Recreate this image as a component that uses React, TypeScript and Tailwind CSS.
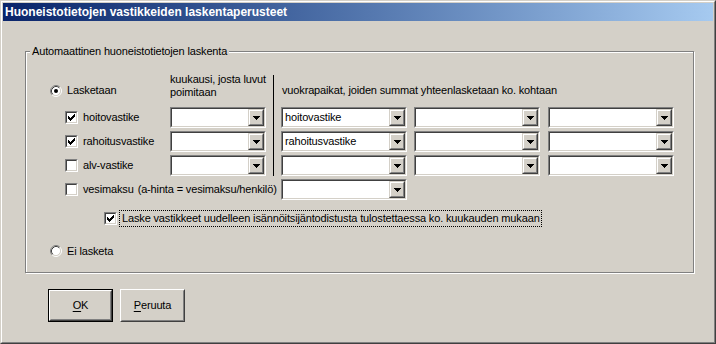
import React from 'react';

// classic win2k 3d frames
const Sunken: React.FC<{ className?: string; children?: React.ReactNode }> = ({ className = '', children }) => (
  <div className={`border border-t-[#808080] border-l-[#808080] border-b-white border-r-white ${className}`}>
    <div className="flex h-full w-full border border-t-[#404040] border-l-[#404040] border-b-[#d4d0c8] border-r-[#d4d0c8] bg-white">
      {children}
    </div>
  </div>
);

const Arrow = () => (
  <svg width="7" height="4" viewBox="0 0 7 4" shapeRendering="crispEdges">
    <rect x="0" y="0" width="7" height="1" fill="#000" />
    <rect x="1" y="1" width="5" height="1" fill="#000" />
    <rect x="2" y="2" width="3" height="1" fill="#000" />
    <rect x="3" y="3" width="1" height="1" fill="#000" />
  </svg>
);

const Combo: React.FC<{ value?: string; className?: string }> = ({ value = '', className = '' }) => (
  <Sunken className={`h-[21px] ${className}`}>
    <div className="flex-1 overflow-hidden whitespace-nowrap pl-[2px] text-[11px] leading-[17px]">{value}</div>
    <div className="h-full w-[16px] border border-t-[#d4d0c8] border-l-[#d4d0c8] border-b-[#404040] border-r-[#404040]">
      <div className="flex h-full w-full items-center justify-center border border-t-white border-l-white border-b-[#808080] border-r-[#808080] bg-[#d4d0c8]">
        <Arrow />
      </div>
    </div>
  </Sunken>
);

const Check: React.FC<{ checked?: boolean }> = ({ checked }) => (
  <Sunken className="h-[13px] w-[13px] shrink-0">
    {checked && (
      <svg width="7" height="7" viewBox="0 0 7 7" shapeRendering="crispEdges" className="ml-px mt-px">
        <rect x="0" y="2" width="1" height="3" fill="#000" />
        <rect x="1" y="3" width="1" height="3" fill="#000" />
        <rect x="2" y="4" width="1" height="3" fill="#000" />
        <rect x="3" y="3" width="1" height="3" fill="#000" />
        <rect x="4" y="2" width="1" height="3" fill="#000" />
        <rect x="5" y="1" width="1" height="3" fill="#000" />
        <rect x="6" y="0" width="1" height="3" fill="#000" />
      </svg>
    )}
  </Sunken>
);

const Radio: React.FC<{ checked?: boolean }> = ({ checked }) => (
  <svg width="12" height="12" viewBox="0 0 12 12" className="shrink-0">
    <circle cx="6" cy="6" r="4.5" fill="#fff" />
    <path d="M2.11 9.89 A5.5 5.5 0 0 1 9.89 2.11" fill="none" stroke="#808080" />
    <path d="M9.89 2.11 A5.5 5.5 0 0 1 2.11 9.89" fill="none" stroke="#fff" />
    <path d="M2.82 9.18 A4.5 4.5 0 0 1 9.18 2.82" fill="none" stroke="#404040" />
    <path d="M9.18 2.82 A4.5 4.5 0 0 1 2.82 9.18" fill="none" stroke="#d4d0c8" />
    {checked && <circle cx="6" cy="6" r="2" fill="#000" />}
  </svg>
);

const rows = [
  { label: 'hoitovastike', checked: true, value: 'hoitovastike' },
  { label: 'rahoitusvastike', checked: true, value: 'rahoitusvastike' },
  { label: 'alv-vastike', checked: false, value: '' },
];

const App: React.FC = () => {
  return (
    <div className="h-[344px] w-[716px] border border-t-[#d4d0c8] border-l-[#d4d0c8] border-b-[#404040] border-r-[#404040] bg-[#d4d0c8] font-['Liberation_Sans',Arial,sans-serif] text-[11px] tracking-[-0.15px] text-black">
      <div className="h-full w-full border border-t-white border-l-white border-b-[#808080] border-r-[#808080] p-px">
        {/* title bar */}
        <div className="h-[18px] bg-linear-to-r from-[#0a246a] to-[#a6caf0] pl-[2px] text-[12px] font-bold leading-[18px] tracking-normal text-white">
          Huoneistotietojen vastikkeiden laskentaperusteet
        </div>

        {/* group box */}
        <div className="relative ml-[22px] mt-[30px] h-[222px] w-[669px] border border-[#808080] shadow-[inset_1px_1px_0_#fff,1px_1px_0_#fff]">
          <div className="absolute left-[4px] top-[-7px] bg-[#d4d0c8] px-[2px] leading-[13px]">
            Automaattinen huoneistotietojen laskenta
          </div>

          <div className="pt-[21px]">
            <div className="grid grid-cols-[144px_96px_15px_126px_7px_126px_8px_126px] grid-rows-[31px_21px_21px_21px_21px] gap-y-[3px]">
              {/* header */}
              <div className="col-start-1 row-start-1 mt-[11px] flex h-[13px] items-center gap-[5px] pl-[24px]">
                <Radio checked />
                <span className="leading-[13px]">Lasketaan</span>
              </div>
              <div className="col-start-2 row-start-1 whitespace-nowrap leading-[13px]">
                kuukausi, josta luvut
                <br />
                poimitaan
              </div>
              <div className="col-start-3 row-span-4 row-start-1 mt-[2px] w-px justify-self-center bg-black" />
              <div className="col-span-5 col-start-4 row-start-1 mt-[11px] whitespace-nowrap pl-px leading-[13px]">
                vuokrapaikat, joiden summat yhteenlasketaan ko. kohtaan
              </div>

              {rows.map((r, i) => (
                <React.Fragment key={r.label}>
                  <div className="col-start-1 flex items-center gap-[5px] pl-[39px]" style={{ gridRowStart: i + 2 }}>
                    <Check checked={r.checked} />
                    <span className="leading-[13px]">{r.label}</span>
                  </div>
                  <Combo className="col-start-2" />
                  <Combo className="col-start-4" value={r.value} />
                  <Combo className="col-start-6" />
                  <Combo className="col-start-8" />
                </React.Fragment>
              ))}

              <div className="col-span-3 col-start-1 row-start-5 flex items-center pl-[39px]">
                <Check />
                <span className="ml-[5px] leading-[13px]">vesimaksu</span>
                <span className="ml-[4px] whitespace-nowrap leading-[13px]">(a-hinta = vesimaksu/henkilö)</span>
              </div>
              <Combo className="col-start-4 row-start-5" />
            </div>

            <div className="mt-[10px] flex h-[17px] items-center pl-[78px]">
              <Check checked />
              <div className="ml-[2px] h-[17px] w-[423px] overflow-hidden whitespace-nowrap border border-dotted border-black pl-[2px] leading-[15px]">
                Laske vastikkeet uudelleen isännöitsijäntodistusta tulostettaessa ko. kuukauden mukaan
              </div>
            </div>

            <div className="mt-[18px] flex h-[12px] items-center gap-[5px] pl-[24px]">
              <Radio />
              <span className="leading-[13px]">Ei lasketa</span>
            </div>
          </div>
        </div>

        {/* buttons */}
        <div className="ml-[45px] mt-[16px] flex gap-[7px]">
          <div className="h-[33px] w-[65px] border border-black">
            <div className="h-full w-full border border-t-white border-l-white border-b-[#404040] border-r-[#404040]">
              <div className="flex h-full w-full items-center justify-center border border-t-[#d4d0c8] border-l-[#d4d0c8] border-b-[#808080] border-r-[#808080]">
                <span><span className="underline underline-offset-[2px]">O</span>K</span>
              </div>
            </div>
          </div>
          <div className="h-[33px] w-[65px] border border-t-white border-l-white border-b-[#404040] border-r-[#404040]">
            <div className="flex h-full w-full items-center justify-center border border-t-[#d4d0c8] border-l-[#d4d0c8] border-b-[#808080] border-r-[#808080]">
              <span><span className="underline underline-offset-[2px]">P</span>eruuta</span>
            </div>
          </div>
        </div>
      </div>
    </div>
  );
};

export default App;
